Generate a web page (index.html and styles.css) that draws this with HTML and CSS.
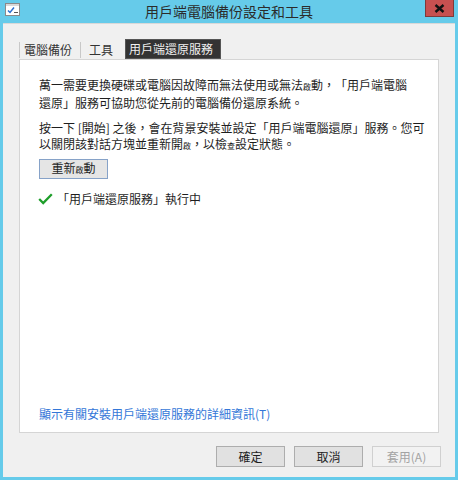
FILE: index.html
```html
<!DOCTYPE html>
<html lang="zh-Hant">
<head>
<meta charset="utf-8">
<link rel="stylesheet" href="styles.css">
</head>
<body>
<div class="window">
  <div class="titlebar">
    <svg class="app-icon" width="15" height="13" viewBox="0 0 15 13">
      <rect x="0.5" y="0.5" width="14" height="12" fill="#fff" stroke="#8a8a8a"/>
      <rect x="1" y="1" width="13" height="2" fill="#d8d8d8"/>
      <path d="M3 7.5 L5 9.5 L9 4.5" fill="none" stroke="#2a6fd0" stroke-width="1.5"/>
      <path d="M9 9.5 H13" stroke="#555" stroke-width="1"/>
    </svg>
    <div class="title">用戶端電腦備份設定和工具</div>
    <div class="close">
      <svg width="11" height="9" viewBox="0 0 11 9"><path d="M1.5 1 L9.5 8 M9.5 1 L1.5 8" stroke="#111" stroke-width="2.4"/></svg>
    </div>
  </div>
  <div class="client">
    <div class="tabs">
      <span class="tab sep">電腦備份</span>
      <span class="tab sep">工具</span>
      <span class="tab active">用戶端還原服務</span>
    </div>
    <div class="panel">
      <p class="para">萬一需要更換硬碟或電腦因故障而無法使用或無法<span class="sm">啟</span>動，「用戶端電腦<br>還原」服務可協助您從先前的電腦備份還原系統。</p>
      <p class="para last">按一下 [開始] 之後，會在背景安裝並設定「用戶端電腦還原」服務。您可<br>以關閉該對話方塊並重新開<span class="sm">啟</span>，以檢<span class="sm">查</span>設定狀態。</p>
      <button class="btn restart">重新<span class="sm">啟</span>動</button>
      <div class="status">
        <svg width="15" height="12" viewBox="0 0 15 12"><path d="M1.2 6 L5.2 10 L13.8 1.2" fill="none" stroke="#1e9e2a" stroke-width="2.3"/></svg>
        <span>「用戶端還原服務」執行中</span>
      </div>
      <div class="spacer"></div>
      <a class="link">顯示有關安裝用戶端還原服務的詳細資訊(T)</a>
    </div>
    <div class="actions">
      <button class="btn">確定</button>
      <button class="btn">取消</button>
      <button class="btn disabled">套用(A)</button>
    </div>
  </div>
</div>
</body>
</html>
```

FILE: styles.css
```css
* { box-sizing: border-box; }
html, body { margin: 0; padding: 0; }
body {
  background: #66cbea;
  font-family: "Noto Sans CJK TC", "Noto Sans", sans-serif;
  font-size: 12px;
  color: #1e1e1e;
  text-spacing-trim: space-all;
}
.window {
  width: 458px;
  height: 480px;
  display: flex;
  flex-direction: column;
  background: #66cbea;
}
.titlebar {
  height: 23px;
  position: relative;
  display: flex;
  align-items: flex-start;
}
.app-icon { margin: 3px 0 0 5px; }
.title {
  position: absolute;
  left: 0; right: 0; top: 2px;
  text-align: center;
  font-size: 14px;
  line-height: 18px;
  color: #2b2b2b;
}
.close {
  position: absolute;
  right: 4px; top: 0;
  width: 29px; height: 17px;
  background: #c75050;
  border: 1px solid #7e3a3a;
  border-top: none;
  display: flex;
  align-items: center;
  justify-content: center;
}
.client {
  flex: 1;
  margin: 0 3px 3px 3px;
  background: #f0f0f0;
  border-top: 1px solid #d9d9d9;
  display: flex;
  flex-direction: column;
  padding: 15px 16px 10px 16px;
}
.tabs {
  display: flex;
  height: 20px;
  align-items: stretch;
}
.tab {
  display: flex;
  align-items: center;
  padding: 0 7px 0 4px;
  line-height: 16px;
  color: #333;
  position: relative;
}
.tab.sep { border-left: 1px solid #c8c8c8; margin: 3px 0 1px 0; }
.tab.sep + .tab.sep { margin-left: 1px; padding-left: 8px; }
.tab.active {
  background: #333;
  color: #f0f0f0;
  margin-left: 5px;
  padding: 0 7px 0 3px;
  border: 1px solid #555;
}
.panel {
  flex: 1;
  background: #fff;
  border: 1px solid #d5d5d5;
  display: flex;
  flex-direction: column;
  align-items: flex-start;
  padding: 17px 20px 10px 19px;
}
.para {
  margin: 0 0 9px 0;
  line-height: 16px;
  white-space: nowrap;
}
.para.last { margin-bottom: 5px; }
.sm { font-size: 8px; }
.btn {
  font-family: inherit;
  font-size: 12px;
  line-height: 16px;
  color: #1e1e1e;
  background: #e1e1e1;
  border: 1px solid #adadad;
  width: 69px;
  height: 21px;
  padding: 0;
  margin: 0;
  text-spacing-trim: space-all;
}
.restart {
  height: 20px;
  border-color: #86a2c8;
  background: #e5e5e5;
}
.status {
  display: flex;
  align-items: center;
  gap: 4px;
  margin-top: 12px;
  margin-left: -1px;
  line-height: 16px;
}
.spacer { flex: 1; }
.link {
  color: #3477d8;
  line-height: 16px;
}
.actions {
  display: flex;
  justify-content: flex-end;
  gap: 9px;
  margin-top: 13px;
  margin-right: -2px;
}
.btn.disabled {
  color: #a3a3a3;
  background: #f2f2f2;
  border-color: #d0d0d0;
}
```
